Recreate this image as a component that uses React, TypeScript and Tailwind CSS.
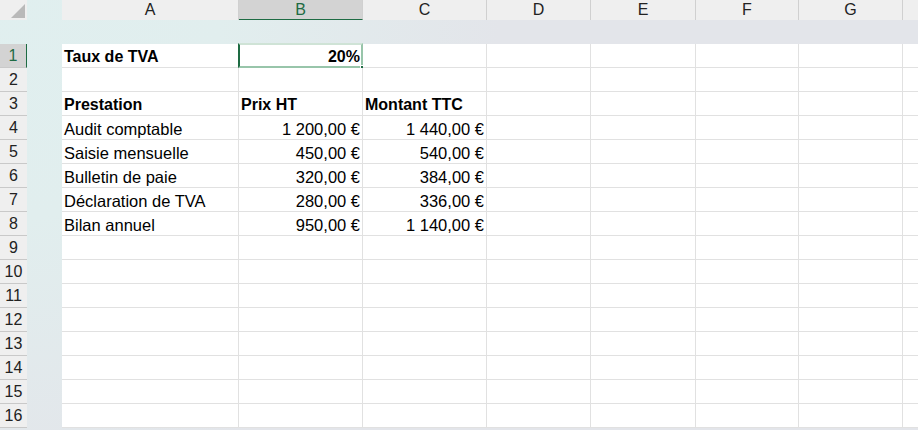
import React from "react";

const cols = [
  { key: "A", w: 177 },
  { key: "B", w: 124 },
  { key: "C", w: 124 },
  { key: "D", w: 104 },
  { key: "E", w: 105 },
  { key: "F", w: 103 },
  { key: "G", w: 104 },
  { key: "", w: 20 },
];

type Cell = { t: string; bold?: boolean; right?: boolean };
const data: Record<number, Cell[]> = {
  1: [{ t: "Taux de TVA", bold: true }, { t: "20%", bold: true, right: true }],
  3: [{ t: "Prestation", bold: true }, { t: "Prix HT", bold: true }, { t: "Montant TTC", bold: true }],
  4: [{ t: "Audit comptable" }, { t: "1 200,00 €", right: true }, { t: "1 440,00 €", right: true }],
  5: [{ t: "Saisie mensuelle" }, { t: "450,00 €", right: true }, { t: "540,00 €", right: true }],
  6: [{ t: "Bulletin de paie" }, { t: "320,00 €", right: true }, { t: "384,00 €", right: true }],
  7: [{ t: "Déclaration de TVA" }, { t: "280,00 €", right: true }, { t: "336,00 €", right: true }],
  8: [{ t: "Bilan annuel" }, { t: "950,00 €", right: true }, { t: "1 140,00 €", right: true }],
};

export default function App() {
  const rows = Array.from({ length: 16 }, (_, i) => i + 1);
  return (
    <div
      className="w-[918px] h-[430px] overflow-hidden bg-[radial-gradient(circle_at_top_left,#e0efef_0px,#e1eeee_220px,#e3e5ea_500px)] text-black"
      style={{ fontFamily: '"Liberation Sans", Arial, sans-serif' }}
    >
      {/* header row */}
      <div className="flex h-[20px]">
        <div className="w-[27px] h-[20px] bg-[#efefef] relative shrink-0">
          <div className="absolute right-[2px] bottom-[2px] w-0 h-0 border-l-[14px] border-l-transparent border-b-[14px] border-b-[#b9b9b9]" />
        </div>
        <div className="w-[35px] shrink-0" />
        {cols.map((c, i) => (
          <div
            key={i}
            style={{ width: c.w }}
            className={
              "shrink-0 h-[20px] flex items-center justify-center text-[16px] border-r border-[#d0d0d0] " +
              (c.key === "B"
                ? "bg-[#d3d3d3] text-[#1e6b43] border-b border-b-[#1e6b43]"
                : "bg-[#efefef] text-[#222]")
            }
          >
            {c.key}
          </div>
        ))}
      </div>
      {/* band */}
      <div className="h-[24px]" />
      {/* body */}
      {rows.map((r) => {
        const cells = data[r] || [];
        return (
          <div key={r} className="flex h-[24px]">
            <div
              className={
                "w-[27px] shrink-0 h-[24px] flex items-center justify-center pt-[1px] text-[16px] border-b border-[#c9c9c9] " +
                (r === 1
                  ? "bg-[#d3d3d3] text-[#1e6b43] border-r border-r-[#1e6b43]"
                  : "bg-[#efefef] text-[#222]")
              }
            >
              {r}
            </div>
            <div className="w-[35px] shrink-0" />
            {cols.map((c, ci) => {
              const cell = cells[ci];
              const sel = r === 1 && c.key === "B";
              return (
                <div
                  key={ci}
                  style={{ width: c.w }}
                  className={
                    "shrink-0 h-[24px] bg-white border-r border-b border-[#e1e1e1] flex items-center pt-[3px] px-[2px] relative whitespace-nowrap " +
                    (cell?.right ? "justify-end " : "justify-start ") +
                    (cell?.bold ? "font-bold text-[16px]" : "text-[16.5px]")
                  }
                >
                  {cell?.t}
                  {sel && (
                    <>
                      <div className="absolute left-[-1px] top-[-1px] right-[-1px] bottom-[-1px] border-2 border-[#98c5aa] border-l-[#1e6b43] border-t-[#cfe3d6]" />
                      <div className="absolute right-[-3px] bottom-[-3px] w-[5px] h-[5px] bg-[#1e6b43] border border-white" />
                    </>
                  )}
                </div>
              );
            })}
          </div>
        );
      })}
    </div>
  );
}
